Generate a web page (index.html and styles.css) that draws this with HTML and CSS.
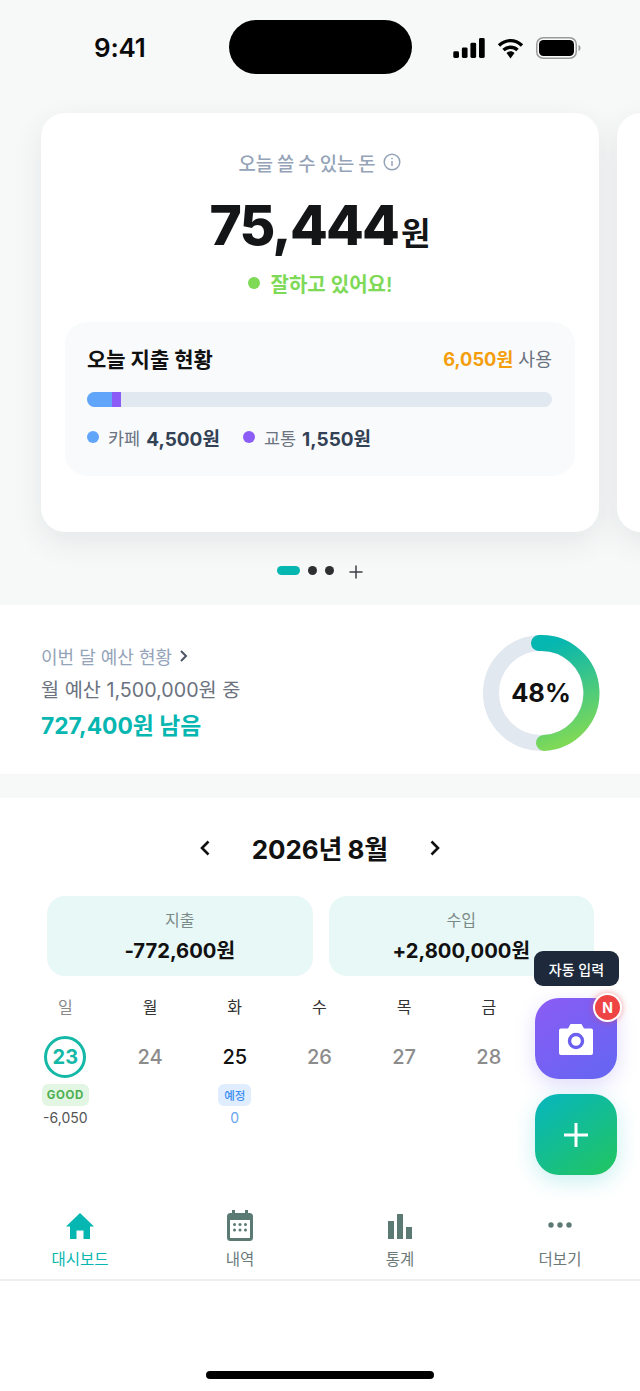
FILE: index.html
```html
<!DOCTYPE html>
<html lang="ko">
<head>
<meta charset="utf-8">
<title>Dashboard</title>
<link rel="stylesheet" href="styles.css">
</head>
<body>
<div class="app">
  <header class="status">
    <span class="time">9:41</span>
    <span class="island"></span>
    <span class="status-icons">
      <svg width="32" height="20" viewBox="0 0 33 21"><rect x="0" y="14" width="6" height="7" rx="1.5"/><rect x="9" y="10" width="6" height="11" rx="1.5"/><rect x="18" y="5" width="6" height="16" rx="1.5"/><rect x="27" y="0" width="6" height="21" rx="1.5"/></svg>
      <svg width="27" height="21" viewBox="0 0 27 21"><path d="M2 7.500 C9 1 18 1 25 7.500" fill="none" stroke="#000" stroke-width="3.400"/><path d="M6.500 12 C10.500 8.300 16.500 8.300 20.500 12" fill="none" stroke="#000" stroke-width="3.400"/><path d="M9.500 15 C11.800 12.800 15.200 12.800 17.500 15 L13.500 20.500 Z"/></svg>
      <svg width="45" height="22" viewBox="0 0 45 22"><rect x="0.750" y="0.750" width="39.500" height="20.500" rx="6.500" fill="none" stroke="#9a9a9a" stroke-width="1.500"/><rect x="3" y="3" width="35" height="16" rx="4.500"/><path d="M42.500 8 C44 8.600 44.500 9.800 44.500 11 C44.500 12.200 44 13.400 42.500 14 Z" fill="#9a9a9a"/></svg>
    </span>
  </header>

  <section class="carousel">
    <article class="card">
      <div class="card-title">오늘 쓸 수 있는 돈
        <svg width="18" height="18" viewBox="0 0 18 18" fill="none" stroke="#94a3b8" stroke-width="1.500"><circle cx="9" cy="9" r="7.800"/><path d="M9 8V13"/><path d="M9 4.800V6.200"/></svg>
      </div>
      <div class="amount"><b>75,444</b><span>원</span></div>
      <div class="mood"><i></i>잘하고 있어요!</div>
      <div class="today">
        <div class="today-head">
          <strong>오늘 지출 현황</strong>
          <span class="used"><b>6,050원</b> 사용</span>
        </div>
        <div class="bar"><i class="seg-blue"></i><i class="seg-purple"></i></div>
        <div class="legend">
          <span class="legend-item"><i class="dot-blue"></i><em>카페</em><b>4,500원</b></span>
          <span class="legend-item"><i class="dot-purple"></i><em>교통</em><b>1,550원</b></span>
        </div>
      </div>
    </article>
    <div class="card-next"></div>
  </section>

  <div class="pager">
    <i class="pill"></i><i class="pdot"></i><i class="pdot"></i>
    <svg width="14" height="14" viewBox="0 0 14 14" stroke="#3f3f46" stroke-width="1.500"><path d="M7 0.500V13.500M0.500 7H13.500"/></svg>
  </div>

  <section class="budget">
    <div class="budget-text">
      <div class="budget-link">이번 달 예산 현황
        <svg width="10" height="14" viewBox="0 0 10 14" fill="none" stroke="#4b5563" stroke-width="2"><path d="M2 2l5 5-5 5"/></svg>
      </div>
      <div class="budget-sub">월 예산 1,500,000원 중</div>
      <div class="budget-left">727,400원 남음</div>
    </div>
    <div class="donut">
      <svg width="118" height="118" viewBox="0 0 118 118">
        <defs><linearGradient id="dg" x1="0.300" y1="0" x2="0.500" y2="1"><stop offset="0" stop-color="#06b6b0"/><stop offset="1" stop-color="#7ed957"/></linearGradient></defs>
        <circle cx="59" cy="59" r="50" fill="none" stroke="#e2e8f0" stroke-width="16"/>
        <path d="M57 9 A50 50 0 0 1 62 108.900" fill="none" stroke="url(#dg)" stroke-width="16" stroke-linecap="round"/>
      </svg>
      <span>48%</span>
    </div>
  </section>

  <section class="calendar">
    <div class="month">
      <svg width="12" height="18" viewBox="0 0 12 18" fill="none" stroke="#111" stroke-width="2.600"><path d="M9.500 2.500L3 9l6.500 6.500"/></svg>
      <strong>2026년 8월</strong>
      <svg width="12" height="18" viewBox="0 0 12 18" fill="none" stroke="#111" stroke-width="2.600"><path d="M2.500 2.500L9 9l-6.500 6.500"/></svg>
    </div>
    <div class="totals">
      <div class="total"><span>지출</span><b>-772,600원</b></div>
      <div class="total"><span>수입</span><b>+2,800,000원</b></div>
    </div>
    <div class="week">
      <span class="wd-sun">일</span><span>월</span><span>화</span><span>수</span><span>목</span><span>금</span><span></span>
    </div>
    <div class="days">
      <div class="day"><span class="num today-num">23</span><span class="tag tag-good">GOOD</span><span class="val">-6,050</span></div>
      <div class="day"><span class="num">24</span></div>
      <div class="day"><span class="num num-dark">25</span><span class="tag tag-plan">예정</span><span class="val val-blue">0</span></div>
      <div class="day"><span class="num">26</span></div>
      <div class="day"><span class="num">27</span></div>
      <div class="day"><span class="num">28</span></div>
      <div class="day"></div>
    </div>
  </section>

  <nav class="tabs">
    <div class="tab tab-on">
      <svg width="30" height="32" viewBox="0 0 30 32"><path fill="#06b6b0" d="M15 4L29 17.500h-4V30h-6.500v-8.500h-7V30H5V17.500H1z"/></svg>
      <span>대시보드</span>
    </div>
    <div class="tab">
      <svg width="30" height="32" viewBox="0 0 30 32"><path fill="#5b7a74" fill-rule="evenodd" d="M7 1h3v3h10V1h3v3h1.500A3.500 3.500 0 0 1 28 7.500v21a3.500 3.500 0 0 1-3.500 3.500h-19A3.500 3.500 0 0 1 2 28.500v-21A3.500 3.500 0 0 1 5.500 4H7zM5 11v17.500a.5.500 0 0 0 .5.5h19a.5.500 0 0 0 .5-.5V11z"/><g fill="#5b7a74"><circle cx="9.500" cy="15.500" r="1.500"/><circle cx="15" cy="15.500" r="1.500"/><circle cx="20.500" cy="15.500" r="1.500"/><circle cx="9.500" cy="21" r="1.500"/><circle cx="15" cy="21" r="1.500"/><circle cx="20.500" cy="21" r="1.500"/></g></svg>
      <span>내역</span>
    </div>
    <div class="tab">
      <svg width="30" height="32" viewBox="0 0 30 32" fill="#5b7a74"><rect x="3" y="12" width="6" height="18"/><rect x="12" y="5" width="6" height="25"/><rect x="21" y="18" width="6" height="12"/></svg>
      <span>통계</span>
    </div>
    <div class="tab">
      <svg width="30" height="32" viewBox="0 0 30 32" fill="#5b7a74"><circle cx="6" cy="16" r="2.700"/><circle cx="15" cy="16" r="2.700"/><circle cx="24" cy="16" r="2.700"/></svg>
      <span>더보기</span>
    </div>
  </nav>

  <footer class="home"><i></i></footer>

  <div class="fab-tip">자동 입력</div>
  <div class="fab fab-cam">
    <svg width="34" height="32" viewBox="0 0 34 32"><path fill="#fff" d="M11.500 1h11l2.500 4.500h7a2 2 0 0 1 2 2V30a2 2 0 0 1-2 2H2a2 2 0 0 1-2-2V7.500a2 2 0 0 1 2-2h7z"/><circle cx="17" cy="18" r="6.500" fill="none" stroke="#6b5ff0" stroke-width="3.400"/></svg>
    <span class="badge">N</span>
  </div>
  <div class="fab fab-add">
    <svg width="26" height="26" viewBox="0 0 26 26" stroke="#fff" stroke-width="3"><path d="M13 1V25M1 13H25"/></svg>
  </div>
</div>
</body>
</html>
```
FILE: styles.css
```css
* { box-sizing: border-box; }
html, body { margin: 0; padding: 0; }
body {
  font-family: Inter, "Noto Sans CJK KR", sans-serif;
  color: #111;
  background: #fff;
}
i, em { font-style: normal; display: block; }
.app {
  position: relative;
  width: 640px;
  height: 1391px;
  overflow: hidden;
  background: #f7f9f9;
}

/* status bar */
.status {
  height: 113px;
  position: relative;
  display: flex;
  justify-content: space-between;
  align-items: flex-start;
  padding: 32px 59px 0 94px;
}
.time { font-size: 26px; font-weight: 600; line-height: 31px; letter-spacing: -.2px; color: #0a0a0a; }
.island {
  position: absolute;
  left: 229px;
  top: 20px;
  width: 183px;
  height: 54px;
  border-radius: 27px;
  background: #000;
}
.status-icons { display: flex; align-items: center; gap: 12px; padding-top: 5px; }
.status-icons svg { display: block; }

/* carousel */
.carousel { display: flex; gap: 18px; padding-left: 41px; height: 419px; }
.card, .card-next {
  flex: none;
  height: 419px;
  background: #fff;
  border-radius: 24px;
  box-shadow: 0 10px 30px rgba(40, 60, 60, .09);
}
.card { width: 558px; padding: 36px 24px 0; }
.card-next { width: 100px; }
.card-title {
  display: flex;
  justify-content: center;
  align-items: center;
  gap: 8px;
  height: 26px;
  font-size: 18.800px;
  font-weight: 500;
  color: #94a3b8;
  word-spacing: -1px;
}
.amount {
  display: flex;
  justify-content: center;
  align-items: baseline;
  margin-top: 15px;
  height: 70px;
  line-height: 70px;
  color: #131517;
}
.amount b { font-size: 55px; font-weight: 800; letter-spacing: -1.800px; }
.amount span { font-size: 32px; font-weight: 700; margin-left: 3px; }
.mood {
  display: flex;
  justify-content: center;
  align-items: center;
  gap: 11px;
  margin-top: 8px;
  height: 30px;
  font-size: 20px;
  font-weight: 600;
  color: #7ed957;
}
.mood i { width: 12px; height: 12px; border-radius: 50%; background: #7ed957; }
.today {
  margin-top: 24px;
  height: 154px;
  background: #f8fafc;
  border-radius: 22px;
  padding: 20px 23px 0 22px;
}
.today-head { display: flex; justify-content: space-between; align-items: center; height: 32px; }
.today-head strong { font-size: 21px; font-weight: 700; color: #111; }
.used { font-size: 18.300px; color: #6b7280; }
.used b { font-weight: 700; color: #f59e0b; }
.bar {
  display: flex;
  margin-top: 18px;
  height: 15px;
  border-radius: 8px;
  background: #e2e8f0;
  overflow: hidden;
}
.seg-blue { width: 25px; background: #60a5fa; }
.seg-purple { width: 9px; background: #8b5cf6; }
.legend { display: flex; gap: 23px; margin-top: 15px; height: 30px; }
.legend-item { display: flex; align-items: center; font-size: 17.500px; color: #6b7280; }
.legend-item i { width: 12px; height: 12px; border-radius: 50%; margin-right: 9px; }
.legend-item b { margin-left: 6px; font-size: 19px; font-weight: 700; color: #334155; }
.dot-blue { background: #60a5fa; }
.dot-purple { background: #8b5cf6; }

/* pager */
.pager {
  display: flex;
  justify-content: center;
  align-items: center;
  height: 73px;
  padding-top: 4px;
  gap: 8px;
}
.pill { width: 23px; height: 9px; border-radius: 5px; background: #06b6b0; }
.pdot { width: 9px; height: 9px; border-radius: 50%; background: #2d2f31; }
.pager svg { margin-left: 7px; margin-top: 2px; }

/* budget */
.budget {
  height: 169px;
  background: #fff;
  display: flex;
  justify-content: space-between;
  align-items: center;
  padding: 0 40px 0 41px;
}
.budget-text { margin-top: 2px; }
.budget-link { display: flex; align-items: center; gap: 7px; height: 32px; font-size: 18px; color: #94a3b8; }
.budget-sub { height: 37px; line-height: 37px; font-size: 19.700px; color: #6b7280; }
.budget-left { height: 33px; line-height: 33px; font-size: 22.800px; font-weight: 700; color: #06b6b0; }
.donut { position: relative; width: 118px; height: 118px; margin-top: 6px; }
.donut svg { display: block; }
.donut span {
  position: absolute;
  inset: 0;
  display: flex;
  justify-content: center;
  align-items: center;
  padding-bottom: 1px;
  font-size: 25.500px;
  font-weight: 700;
  color: #111;
}

/* calendar */
.calendar {
  margin-top: 24px;
  height: 593px;
  background: #fff;
  padding: 0 0 0 23px;
}
.month {
  display: flex;
  justify-content: center;
  align-items: center;
  gap: 41px;
  width: 594px;
  height: 98px;
  padding-top: 1px;
}
.month strong { font-size: 26px; font-weight: 700; letter-spacing: -.1px; color: #111; word-spacing: -1px; }
.totals { display: flex; gap: 16px; padding-left: 24px; width: 571px; }
.total {
  flex: 1;
  height: 80px;
  border-radius: 18px;
  background: #e8f8f7;
  display: flex;
  flex-direction: column;
  align-items: center;
  padding-top: 12px;
}
.total span { font-size: 16px; line-height: 24px; color: #7a8a88; }
.total b { margin-top: 4px; font-size: 20.200px; line-height: 30px; font-weight: 700; color: #111; }
.week, .days { display: grid; grid-template-columns: repeat(7, 84.700px); }
.week { margin-top: 16px; height: 30px; text-align: center; font-size: 16px; line-height: 30px; color: #333; }
.wd-sun { color: #8a8a8a; }
.days { margin-top: 14px; }
.day { display: flex; flex-direction: column; align-items: center; }
.num {
  width: 42px;
  height: 42px;
  display: flex;
  justify-content: center;
  align-items: center;
  border-radius: 50%;
  font-size: 20px;
  font-weight: 500;
  color: #8c8c8c;
}
.num-dark { color: #111; }
.today-num { border: 3.500px solid #14b8a6; color: #14b8a6; font-weight: 700; font-size: 20px; }
.tag { margin-top: 6px; height: 22px; border-radius: 6px; display: flex; align-items: center; justify-content: center; }
.tag-good { width: 47px; background: #e3f6e3; color: #4caf50; font-size: 11.500px; font-weight: 700; letter-spacing: .6px; }
.tag-plan { width: 33px; background: #e0edff; color: #3b8ff0; font-size: 11.500px; font-weight: 500; }
.val { margin-top: 2px; font-size: 14px; line-height: 20px; color: #555; }
.val-blue { color: #6aa5f0; }

/* tabs */
.tabs {
  position: absolute;
  left: 0;
  top: 1190px;
  width: 640px;
  height: 91px;
  display: flex;
  background: #fff;
  border-bottom: 2px solid #eef0f0;
}
.tab { flex: 1; display: flex; flex-direction: column; align-items: center; padding-top: 19px; color: #6b7a78; }
.tab svg { display: block; height: 32px; }
.tab span { margin-top: 8px; font-size: 15.500px; line-height: 22px; font-weight: 400; }
.tab-on { color: #06b6b0; }

.home { position: absolute; left: 0; right: 0; bottom: 12px; display: flex; justify-content: center; }
.home i { width: 228px; height: 8px; border-radius: 4px; background: #000; }

/* floating buttons */
.fab-tip {
  position: absolute;
  left: 534px;
  top: 951px;
  width: 85px;
  height: 35px;
  border-radius: 9px;
  background: #1e293b;
  color: #fff;
  font-size: 14px;
  font-weight: 500;
  display: flex;
  justify-content: center;
  align-items: center;
}
.fab {
  position: absolute;
  left: 535px;
  width: 82px;
  height: 81px;
  border-radius: 24px;
  display: flex;
  justify-content: center;
  align-items: center;
}
.fab-cam {
  top: 998px;
  background: linear-gradient(145deg, #8b5cf6, #6366f1);
  box-shadow: 0 6px 20px rgba(120, 90, 240, .22);
}
.fab-add {
  top: 1094px;
  background: linear-gradient(145deg, #06b6c0, #22c55e);
  box-shadow: 0 6px 22px rgba(6, 182, 190, .22);
}
.badge {
  position: absolute;
  right: -5px;
  top: -5px;
  width: 29px;
  height: 29px;
  border-radius: 50%;
  border: 2px solid #fff;
  background: #ef4444;
  box-shadow: 0 0 6px rgba(239, 68, 68, .5);
  color: #fff;
  font-size: 14px;
  font-weight: 700;
  display: flex;
  justify-content: center;
  align-items: center;
}
```
